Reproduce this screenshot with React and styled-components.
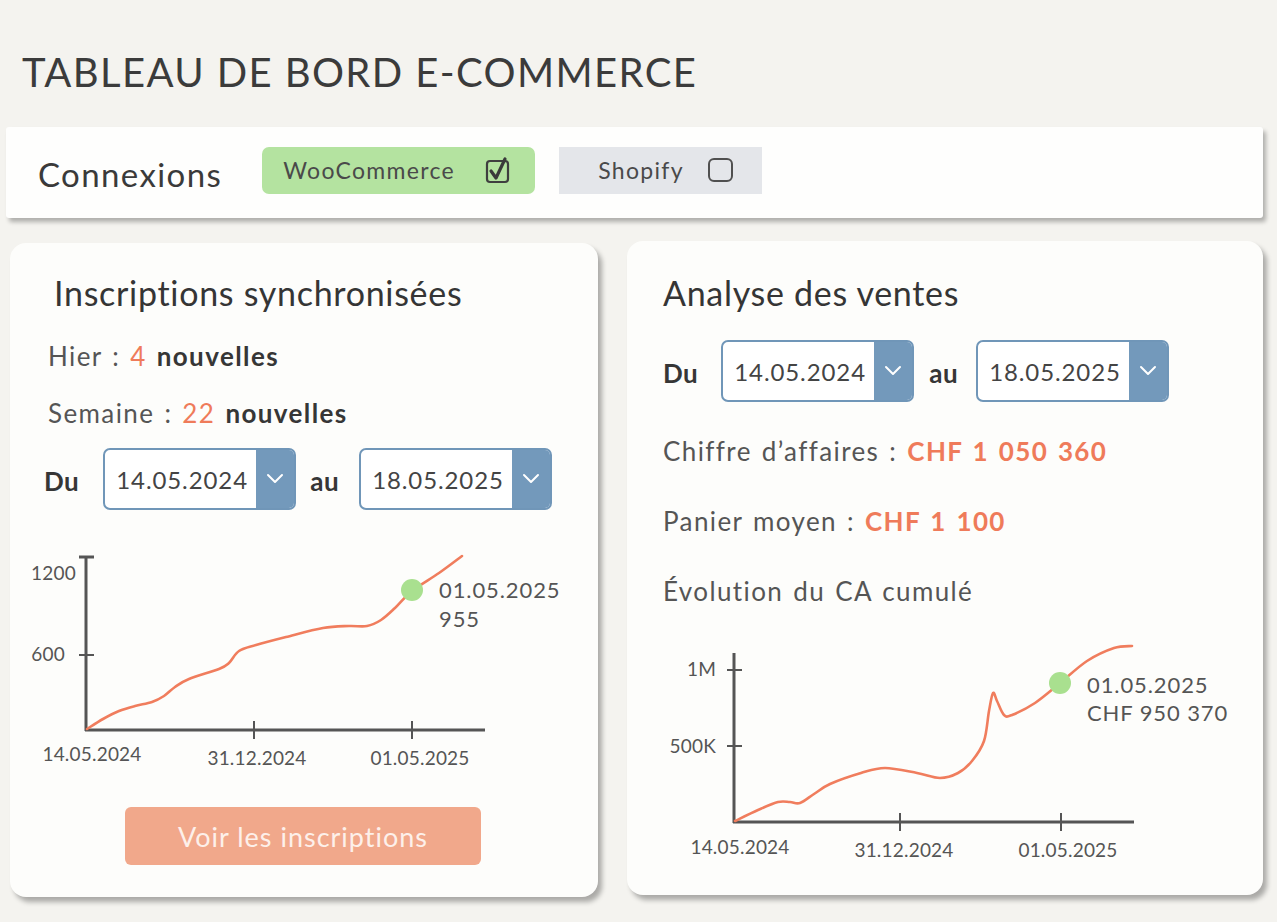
import React from 'react'
import styled, { createGlobalStyle } from 'styled-components'

const GlobalStyle = createGlobalStyle`
  html, body {
    margin: 0;
    background: #f4f3ef;
  }
  body {
    font-family: Lato, "Noto Sans", sans-serif;
    color: #3a3a3a;
  }
`

const ORANGE = '#ef7b5a'
const LINE = '#f07d5d'
const AXIS = '#555555'

// turns a list of points into a smooth bezier path
const smooth = (pts) => {
  let d = `M${pts[0][0]},${pts[0][1]}`
  for (let i = 0; i < pts.length - 1; i++) {
    const p0 = pts[i - 1] || pts[i]
    const p1 = pts[i]
    const p2 = pts[i + 1]
    const p3 = pts[i + 2] || p2
    const c1 = [p1[0] + (p2[0] - p0[0]) / 6, p1[1] + (p2[1] - p0[1]) / 6]
    const c2 = [p2[0] - (p3[0] - p1[0]) / 6, p2[1] - (p3[1] - p1[1]) / 6]
    d += ` C${c1[0]},${c1[1]} ${c2[0]},${c2[1]} ${p2[0]},${p2[1]}`
  }
  return d
}

const signupPoints = [
  [88, 730], [104, 720], [120, 712], [136, 707], [153, 703], [165, 697],
  [176, 688], [190, 680], [220, 670], [230, 664], [240, 652], [257, 646],
  [287, 638], [324, 629], [350, 627], [368, 627], [382, 621], [396, 609],
  [413, 592], [440, 574], [463, 557]
]

const salesPoints = [
  [735, 820], [758, 809], [778, 801], [790, 801], [800, 802], [814, 793],
  [830, 783], [861, 772], [885, 767], [917, 772], [940, 777], [958, 772],
  [972, 760], [984, 740], [989, 710], [993, 692], [997, 700], [1004, 714],
  [1012, 714], [1035, 702], [1059, 683], [1087, 660], [1114, 647], [1132, 645]
]

const Dashboard = () => {
  return (
    <Page>
      <GlobalStyle />
      <Title>TABLEAU DE BORD E-COMMERCE</Title>

      <Toolbar>
        <ToolbarLabel>Connexions</ToolbarLabel>
        <Chip $active $pl={21} $pr={23} $w={273}>
          WooCommerce
          <CheckedBox />
        </Chip>
        <Chip $pl={39} $pr={27} $w={203}>
          Shopify
          <EmptyBox />
        </Chip>
      </Toolbar>

      <Cards>
        <Card $pt={30} $top={2}>
          <CardTitle $ml={8}>Inscriptions synchronisées</CardTitle>
          <StatLine $mt={28} $ml={2}>
            Hier : <Num>4</Num> <strong>nouvelles</strong>
          </StatLine>
          <StatLine $mt={27} $ml={2}>
            Semaine : <Num>22</Num> <strong>nouvelles</strong>
          </StatLine>
          <RangeRow $mt={20} $ml={-2}>
            <RangeWord $mr={24}>Du</RangeWord>
            <DateSelect value="14.05.2024" />
            <RangeWord $ml={14} $mr={20}>au</RangeWord>
            <DateSelect value="18.05.2025" />
          </RangeRow>
          <ChartSvg $mt={34} $ml={-17} width="540" height="230" viewBox="30 545 540 230">
            <line x1="87" y1="557" x2="87" y2="732" stroke={AXIS} strokeWidth="3" />
            <line x1="80" y1="558" x2="95" y2="558" stroke={AXIS} strokeWidth="3" />
            <line x1="86" y1="731" x2="486" y2="731" stroke={AXIS} strokeWidth="3" />
            <line x1="80" y1="656" x2="95" y2="656" stroke={AXIS} strokeWidth="2" />
            <line x1="255" y1="722" x2="255" y2="740" stroke={AXIS} strokeWidth="2" />
            <line x1="413" y1="722" x2="413" y2="740" stroke={AXIS} strokeWidth="2" />
            <AxisText x="77" y="581" textAnchor="end">1200</AxisText>
            <AxisText x="66" y="662" textAnchor="end">600</AxisText>
            <AxisText x="93" y="762" textAnchor="middle">14.05.2024</AxisText>
            <AxisText x="258" y="766" textAnchor="middle">31.12.2024</AxisText>
            <AxisText x="421" y="766" textAnchor="middle">01.05.2025</AxisText>
            <path d={smooth(signupPoints)} fill="none" stroke={LINE} strokeWidth="2.6" strokeLinecap="round" />
            <circle cx="413" cy="591" r="11" fill="#a9e08f" />
            <PointText x="440" y="599">01.05.2025</PointText>
            <PointText x="440" y="628">955</PointText>
          </ChartSvg>
          <Button>Voir les inscriptions</Button>
        </Card>

        <Card $pt={32} $top={0}>
          <CardTitle $ml={0}>Analyse des ventes</CardTitle>
          <RangeRow $mt={27} $ml={0}>
            <RangeWord $mr={23}>Du</RangeWord>
            <DateSelect value="14.05.2024" />
            <RangeWord $ml={15} $mr={18}>au</RangeWord>
            <DateSelect value="18.05.2025" />
          </RangeRow>
          <StatLine $mt={34}>
            Chiffre d’affaires : <Amount>CHF 1 050 360</Amount>
          </StatLine>
          <StatLine $mt={40}>
            Panier moyen : <Amount>CHF 1 100</Amount>
          </StatLine>
          <StatLine $mt={40}>Évolution du CA cumulé</StatLine>
          <ChartSvg $mt={25} $ml={-3} width="590" height="230" viewBox="660 630 590 230">
            <line x1="734" y1="652" x2="734" y2="822" stroke={AXIS} strokeWidth="3" />
            <line x1="733" y1="821" x2="1134" y2="821" stroke={AXIS} strokeWidth="3" />
            <line x1="727" y1="669" x2="742" y2="669" stroke={AXIS} strokeWidth="2" />
            <line x1="727" y1="745" x2="742" y2="745" stroke={AXIS} strokeWidth="2" />
            <line x1="900" y1="812" x2="900" y2="830" stroke={AXIS} strokeWidth="2" />
            <line x1="1061" y1="812" x2="1061" y2="830" stroke={AXIS} strokeWidth="2" />
            <AxisText x="716" y="675" textAnchor="end">1M</AxisText>
            <AxisText x="716" y="752" textAnchor="end">500K</AxisText>
            <AxisText x="740" y="853" textAnchor="middle">14.05.2024</AxisText>
            <AxisText x="904" y="856" textAnchor="middle">31.12.2024</AxisText>
            <AxisText x="1068" y="856" textAnchor="middle">01.05.2025</AxisText>
            <path d={smooth(salesPoints)} fill="none" stroke={LINE} strokeWidth="2.6" strokeLinecap="round" />
            <circle cx="1060" cy="682" r="11" fill="#a9e08f" />
            <PointText x="1087" y="692">01.05.2025</PointText>
            <PointText x="1087" y="720">CHF 950 370</PointText>
          </ChartSvg>
        </Card>
      </Cards>
    </Page>
  )
}

const DateSelect = ({ value }) => (
  <Select>
    <SelectValue>{value}</SelectValue>
    <SelectArrow>
      <svg width="18" height="12" viewBox="0 0 18 12">
        <path d="M2 2 L9 9 L16 2" fill="none" stroke="#ffffff" strokeWidth="2" strokeLinecap="round" strokeLinejoin="round" />
      </svg>
    </SelectArrow>
  </Select>
)

const CheckedBox = () => (
  <svg width="28" height="30" viewBox="0 0 28 30">
    <rect x="3" y="6" width="21" height="21" rx="3" fill="none" stroke="#3f3f3f" strokeWidth="2.2" />
    <path d="M7 16 L12 23 L21 4" fill="none" stroke="#3a3a3a" strokeWidth="3.2" strokeLinecap="round" strokeLinejoin="round" />
  </svg>
)

const EmptyBox = () => (
  <svg width="28" height="28" viewBox="0 0 28 28">
    <rect x="2" y="3" width="23" height="22" rx="5" fill="none" stroke="#505050" strokeWidth="2" />
  </svg>
)

export default Dashboard

const Page = styled.div`
  width: 1257px;
  padding: 48px 0 24px 6px;
`

const Title = styled.h1`
  margin: 0 0 31px 16px;
  font-family: Lato, "Noto Sans", sans-serif;
  font-weight: 400;
  font-size: 40px;
  line-height: 48px;
  color: #3b3b3b;
  letter-spacing: 1.4px;
`

const Toolbar = styled.div`
  height: 91px;
  display: flex;
  align-items: center;
  padding-left: 32px;
  background: #fefefd;
  border-radius: 3px;
  box-shadow: 3px 4px 4px rgba(0, 0, 0, 0.28);
`

const ToolbarLabel = styled.span`
  font-size: 33px;
  letter-spacing: 1.4px;
  color: #3a3a3a;
  margin-right: 40px;
  margin-top: 2px;
`

const Chip = styled.div`
  width: ${(p) => p.$w}px;
  box-sizing: border-box;
  height: 47px;
  margin-right: 24px;
  margin-top: -5px;
  display: flex;
  align-items: center;
  justify-content: space-between;
  padding: 0 ${(p) => p.$pr}px 0 ${(p) => p.$pl}px;
  font-size: 23px;
  letter-spacing: 1.3px;
  color: #4a4a4a;
  background: ${(p) => (p.$active ? '#b4e3a0' : '#e4e6ea')};
  border-radius: ${(p) => (p.$active ? '7px' : '0')};
`

const Cards = styled.div`
  display: grid;
  grid-template-columns: 588px 636px;
  column-gap: 29px;
  align-items: start;
  margin-top: 23px;
  padding-left: 4px;
`

const Card = styled.section`
  height: 654px;
  margin-top: ${(p) => p.$top}px;
  box-sizing: border-box;
  padding: ${(p) => p.$pt}px 20px 0 36px;
  background: #fdfdfb;
  border-radius: 16px;
  box-shadow: 4px 5px 5px rgba(0, 0, 0, 0.3);
  display: flex;
  flex-direction: column;
  align-items: flex-start;
`

const CardTitle = styled.h2`
  margin: 0 0 0 ${(p) => p.$ml || 0}px;
  font-weight: 400;
  font-size: 34px;
  letter-spacing: 0.7px;
  line-height: 40px;
  color: #353535;
`

const StatLine = styled.div`
  margin: ${(p) => p.$mt || 0}px 0 0 ${(p) => p.$ml || 0}px;
  font-size: 26px;
  letter-spacing: 1.4px;
  word-spacing: 2px;
  line-height: 30px;
  color: #555555;

  strong {
    font-weight: 700;
    color: #363636;
  }
`

const Num = styled.span`
  color: ${ORANGE};
`

const Amount = styled.span`
  color: ${ORANGE};
  font-weight: 700;
`

const RangeRow = styled.div`
  margin: ${(p) => p.$mt || 0}px 0 0 ${(p) => p.$ml || 0}px;
  display: flex;
  align-items: center;
`

const RangeWord = styled.span`
  margin: 4px ${(p) => p.$mr || 0}px 0 ${(p) => p.$ml || 0}px;
  font-size: 26px;
  letter-spacing: 0.5px;
  font-weight: 700;
  color: #363636;
`

const Select = styled.div`
  width: 193px;
  height: 62px;
  box-sizing: border-box;
  display: flex;
  border: 2px solid #7096b8;
  border-radius: 7px;
  overflow: hidden;
  background: #ffffff;
`

const SelectValue = styled.div`
  flex: 1;
  display: flex;
  align-items: center;
  padding-left: 11px;
  font-size: 24px;
  letter-spacing: 0.9px;
  color: #444444;
`

const SelectArrow = styled.div`
  width: 38px;
  display: flex;
  align-items: center;
  justify-content: center;
  background: #7399bb;
`

const ChartSvg = styled.svg`
  display: block;
  margin: ${(p) => p.$mt || 0}px 0 0 ${(p) => p.$ml || 0}px;
  overflow: visible;
`

const AxisText = styled.text`
  font-family: Lato, "Noto Sans", sans-serif;
  font-size: 19px;
  letter-spacing: 0.2px;
  fill: #555555;
`

const PointText = styled.text`
  font-family: Lato, "Noto Sans", sans-serif;
  font-size: 22px;
  letter-spacing: 0.9px;
  fill: #555555;
`

const Button = styled.button`
  margin: 33px 0 0 79px;
  width: 356px;
  height: 58px;
  border: none;
  border-radius: 6px;
  background: #f1a88b;
  color: #fdf0ea;
  font-family: Lato, "Noto Sans", sans-serif;
  font-size: 27px;
  letter-spacing: 1px;
  cursor: pointer;
`
